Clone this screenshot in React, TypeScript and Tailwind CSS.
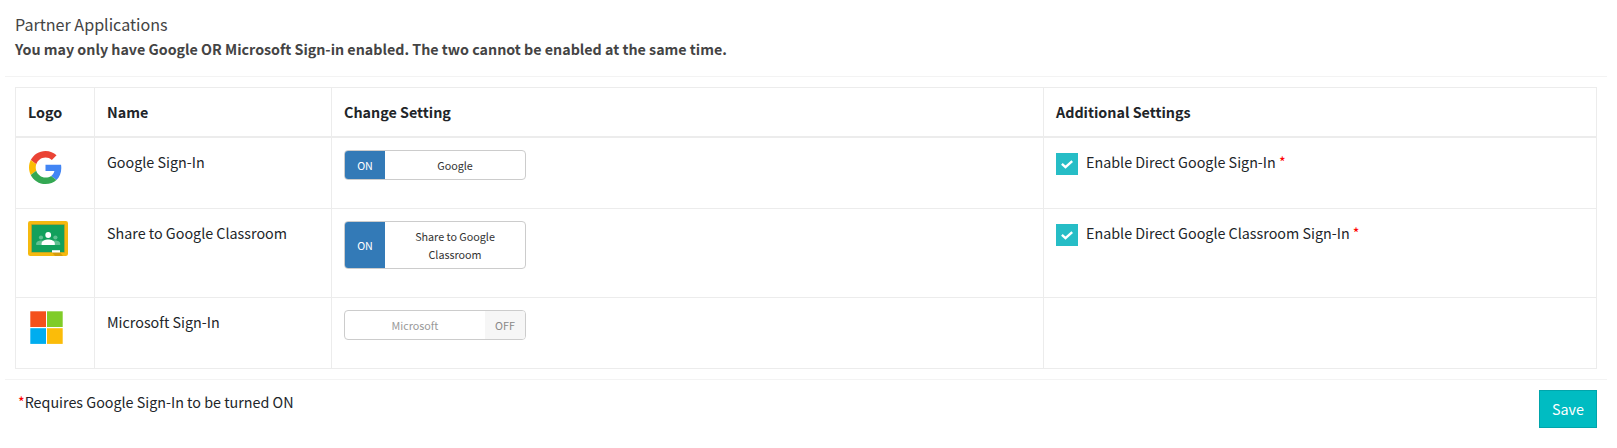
import React from 'react';

interface PartnerApp {
  id: string;
  name: string;
  toggleLabel: string;
  enabled: boolean;
  logo: React.ReactNode;
  additional?: string;
  toggleHeight: string;
  rowHeight: string;
}

const GoogleLogo = () => (
  <svg viewBox="0 0 48 48" className="ml-[1px] mt-[1px] block h-[33px] w-[33px]">
    <path fill="#EA4335" d="M24 9.5c3.54 0 6.71 1.22 9.21 3.6l6.85-6.85C35.9 2.38 30.47 0 24 0 14.62 0 6.51 5.38 2.56 13.22l7.98 6.19C12.43 13.72 17.74 9.5 24 9.5z" />
    <path fill="#4285F4" d="M46.98 24.55c0-1.57-.15-3.09-.38-4.55H24v9.02h12.94c-.58 2.96-2.26 5.48-4.78 7.18l7.73 6c4.51-4.18 7.09-10.36 7.09-17.65z" />
    <path fill="#FBBC05" d="M10.53 28.59c-.48-1.45-.76-2.99-.76-4.59s.27-3.14.76-4.59l-7.98-6.19C.92 16.46 0 20.12 0 24c0 3.88.92 7.54 2.56 10.78l7.97-6.19z" />
    <path fill="#34A853" d="M24 48c6.48 0 11.93-2.13 15.89-5.81l-7.73-6c-2.15 1.45-4.92 2.3-8.16 2.3-6.26 0-11.57-4.22-13.47-9.91l-7.98 6.19C6.51 42.62 14.62 48 24 48z" />
  </svg>
);

const ClassroomLogo = () => (
  <svg viewBox="0 0 40 35" className="block h-[35px] w-[40px]">
    <rect width="40" height="35" rx="2.2" fill="#F5B90F" />
    <rect x="3.3" y="3.3" width="33.4" height="28.2" fill="#8f9b34" />
    <rect x="4" y="4" width="32" height="27" fill="#12A05C" />
    <circle cx="13" cy="16.5" r="2.1" fill="#5fc191" />
    <circle cx="27.4" cy="16.5" r="2.1" fill="#5fc191" />
    <path d="M8.2 24v-1.4c0-2 2.6-3.2 5-3.2 2 0 3 .5 3 1.2V24z" fill="#5fc191" />
    <path d="M32.2 24v-1.4c0-2-2.6-3.2-5-3.2-2 0-3 .5-3 1.2V24z" fill="#5fc191" />
    <circle cx="20.2" cy="14" r="2.9" fill="#fff" />
    <path d="M13.6 24v-1.5c0-2.6 3.6-4 6.6-4s6.6 1.4 6.6 4V24z" fill="#fff" />
    <path d="M24 31.5h8l3 3.500h-8z" fill="#D69C0C" />
    <rect x="24" y="29.2" width="8" height="2.3" fill="#fff" />
  </svg>
);

const MicrosoftLogo = () => (
  <svg viewBox="0 0 33 33" className="ml-[2px] mt-[1px] block h-[33px] w-[33px]">
    <rect x=".3" y=".3" width="15.7" height="15.7" fill="#F4511C" />
    <rect x="17" y=".3" width="15.7" height="15.7" fill="#80CC28" />
    <rect x=".3" y="17.2" width="15.7" height="15.7" fill="#00ADEF" />
    <rect x="17" y="17.2" width="15.7" height="15.7" fill="#FBBC09" />
  </svg>
);

const apps: PartnerApp[] = [
  {
    id: 'google',
    name: 'Google Sign-In',
    toggleLabel: 'Google',
    enabled: true,
    logo: <GoogleLogo />,
    additional: 'Enable Direct Google Sign-In',
    toggleHeight: 'h-[30px]',
    rowHeight: 'h-[71px]',
  },
  {
    id: 'classroom',
    name: 'Share to Google Classroom',
    toggleLabel: 'Share to Google Classroom',
    enabled: true,
    logo: <ClassroomLogo />,
    additional: 'Enable Direct Google Classroom Sign-In',
    toggleHeight: 'h-12',
    rowHeight: 'h-[89px]',
  },
  {
    id: 'microsoft',
    name: 'Microsoft Sign-In',
    toggleLabel: 'Microsoft',
    enabled: false,
    logo: <MicrosoftLogo />,
    toggleHeight: 'h-[30px]',
    rowHeight: 'h-[71px]',
  },
];

const Toggle: React.FC<{ app: PartnerApp }> = ({ app }) => (
  <button
    type="button"
    className={`flex w-[182px] overflow-hidden rounded-[4px] border border-[#ccc] text-[10.75px] leading-[18px] ${app.toggleHeight}`}
  >
    {app.enabled && (
      <span className="flex w-10 shrink-0 items-center justify-center self-stretch bg-[#337ab7] pt-[2px] text-white">ON</span>
    )}
    <span
      className={`flex flex-1 items-center justify-center self-stretch px-5 pt-[2px] text-center ${
        app.enabled ? 'text-[#333]' : 'text-[#999]'
      }`}
    >
      {app.toggleLabel}
    </span>
    {!app.enabled && (
      <span className="flex w-10 shrink-0 items-center justify-center self-stretch bg-[#f6f6f6] pt-[2px] text-[#888]">OFF</span>
    )}
  </button>
);

const Checkbox = () => (
  <span className="mt-[3px] flex h-[22px] w-[22px] shrink-0 items-center justify-center bg-[#26bdc6]">
    <svg viewBox="0 0 12 9" className="h-[9px] w-3" fill="none" stroke="#fff" strokeWidth="2.4">
      <path d="M.9 3.900 4.500 7.200 11.200 1.200" />
    </svg>
  </span>
);

const App: React.FC = () => {
  const head = 'border-r border-b-2 border-[#ececec] px-3 text-left font-bold';
  const cell = 'border-r border-b border-[#ececec] pl-3 pt-3 text-left align-top';

  return (
    <div className="h-[448px] bg-white pl-[5px] pr-[10px] font-['Noto_Sans_CJK_SC',sans-serif] text-[14.32px] leading-6 text-[#212529]">
      {/* Heading */}
      <div className="h-[77px] border-b border-[#f3f3f3] px-[10px] pt-3 text-[#444]">
        <h4 className="h-[25px] text-[16.1px]">Partner Applications</h4>
        <p className="text-[14.28px] font-bold">
          You may only have Google OR Microsoft Sign-in enabled. The two cannot be enabled at the same time.
        </p>
      </div>

      <table className="ml-[10px] mt-[10px] w-[1582px] table-fixed border-separate border-spacing-0 border-l border-t border-[#ececec]">
        <colgroup>
          <col className="w-[79px]" />
          <col className="w-[237px]" />
          <col className="w-[712px]" />
          <col className="w-[553px]" />
        </colgroup>
        <thead>
          <tr className="h-[50px]">
            <th className={head}>Logo</th>
            <th className={head}>Name</th>
            <th className={head}>Change Setting</th>
            <th className={head}>Additional Settings</th>
          </tr>
        </thead>
        <tbody>
          {apps.map((app) => (
            <tr key={app.id} className={app.rowHeight}>
              <td className={cell}>{app.logo}</td>
              <td className={cell}>{app.name}</td>
              <td className={cell}>
                <Toggle app={app} />
              </td>
              <td className={cell}>
                {app.additional && (
                  <label className="flex">
                    <Checkbox />
                    <span className="ml-2">
                      {app.additional} <span className="text-[#f00]">*</span>
                    </span>
                  </label>
                )}
              </td>
            </tr>
          ))}
        </tbody>
      </table>

      {/* Footer */}
      <div className="mt-[10px] flex justify-between border-t border-[#f3f3f3] pl-[13px] pr-[10px] pt-[10px]">
        <p>
          <span className="text-[#f00]">*</span>Requires Google Sign-In to be turned ON
        </p>
        <button type="button" className="h-[38px] w-[58px] border border-[#00a5ab] bg-[#00bcc2] text-white">
          Save
        </button>
      </div>
    </div>
  );
};

export default App;
